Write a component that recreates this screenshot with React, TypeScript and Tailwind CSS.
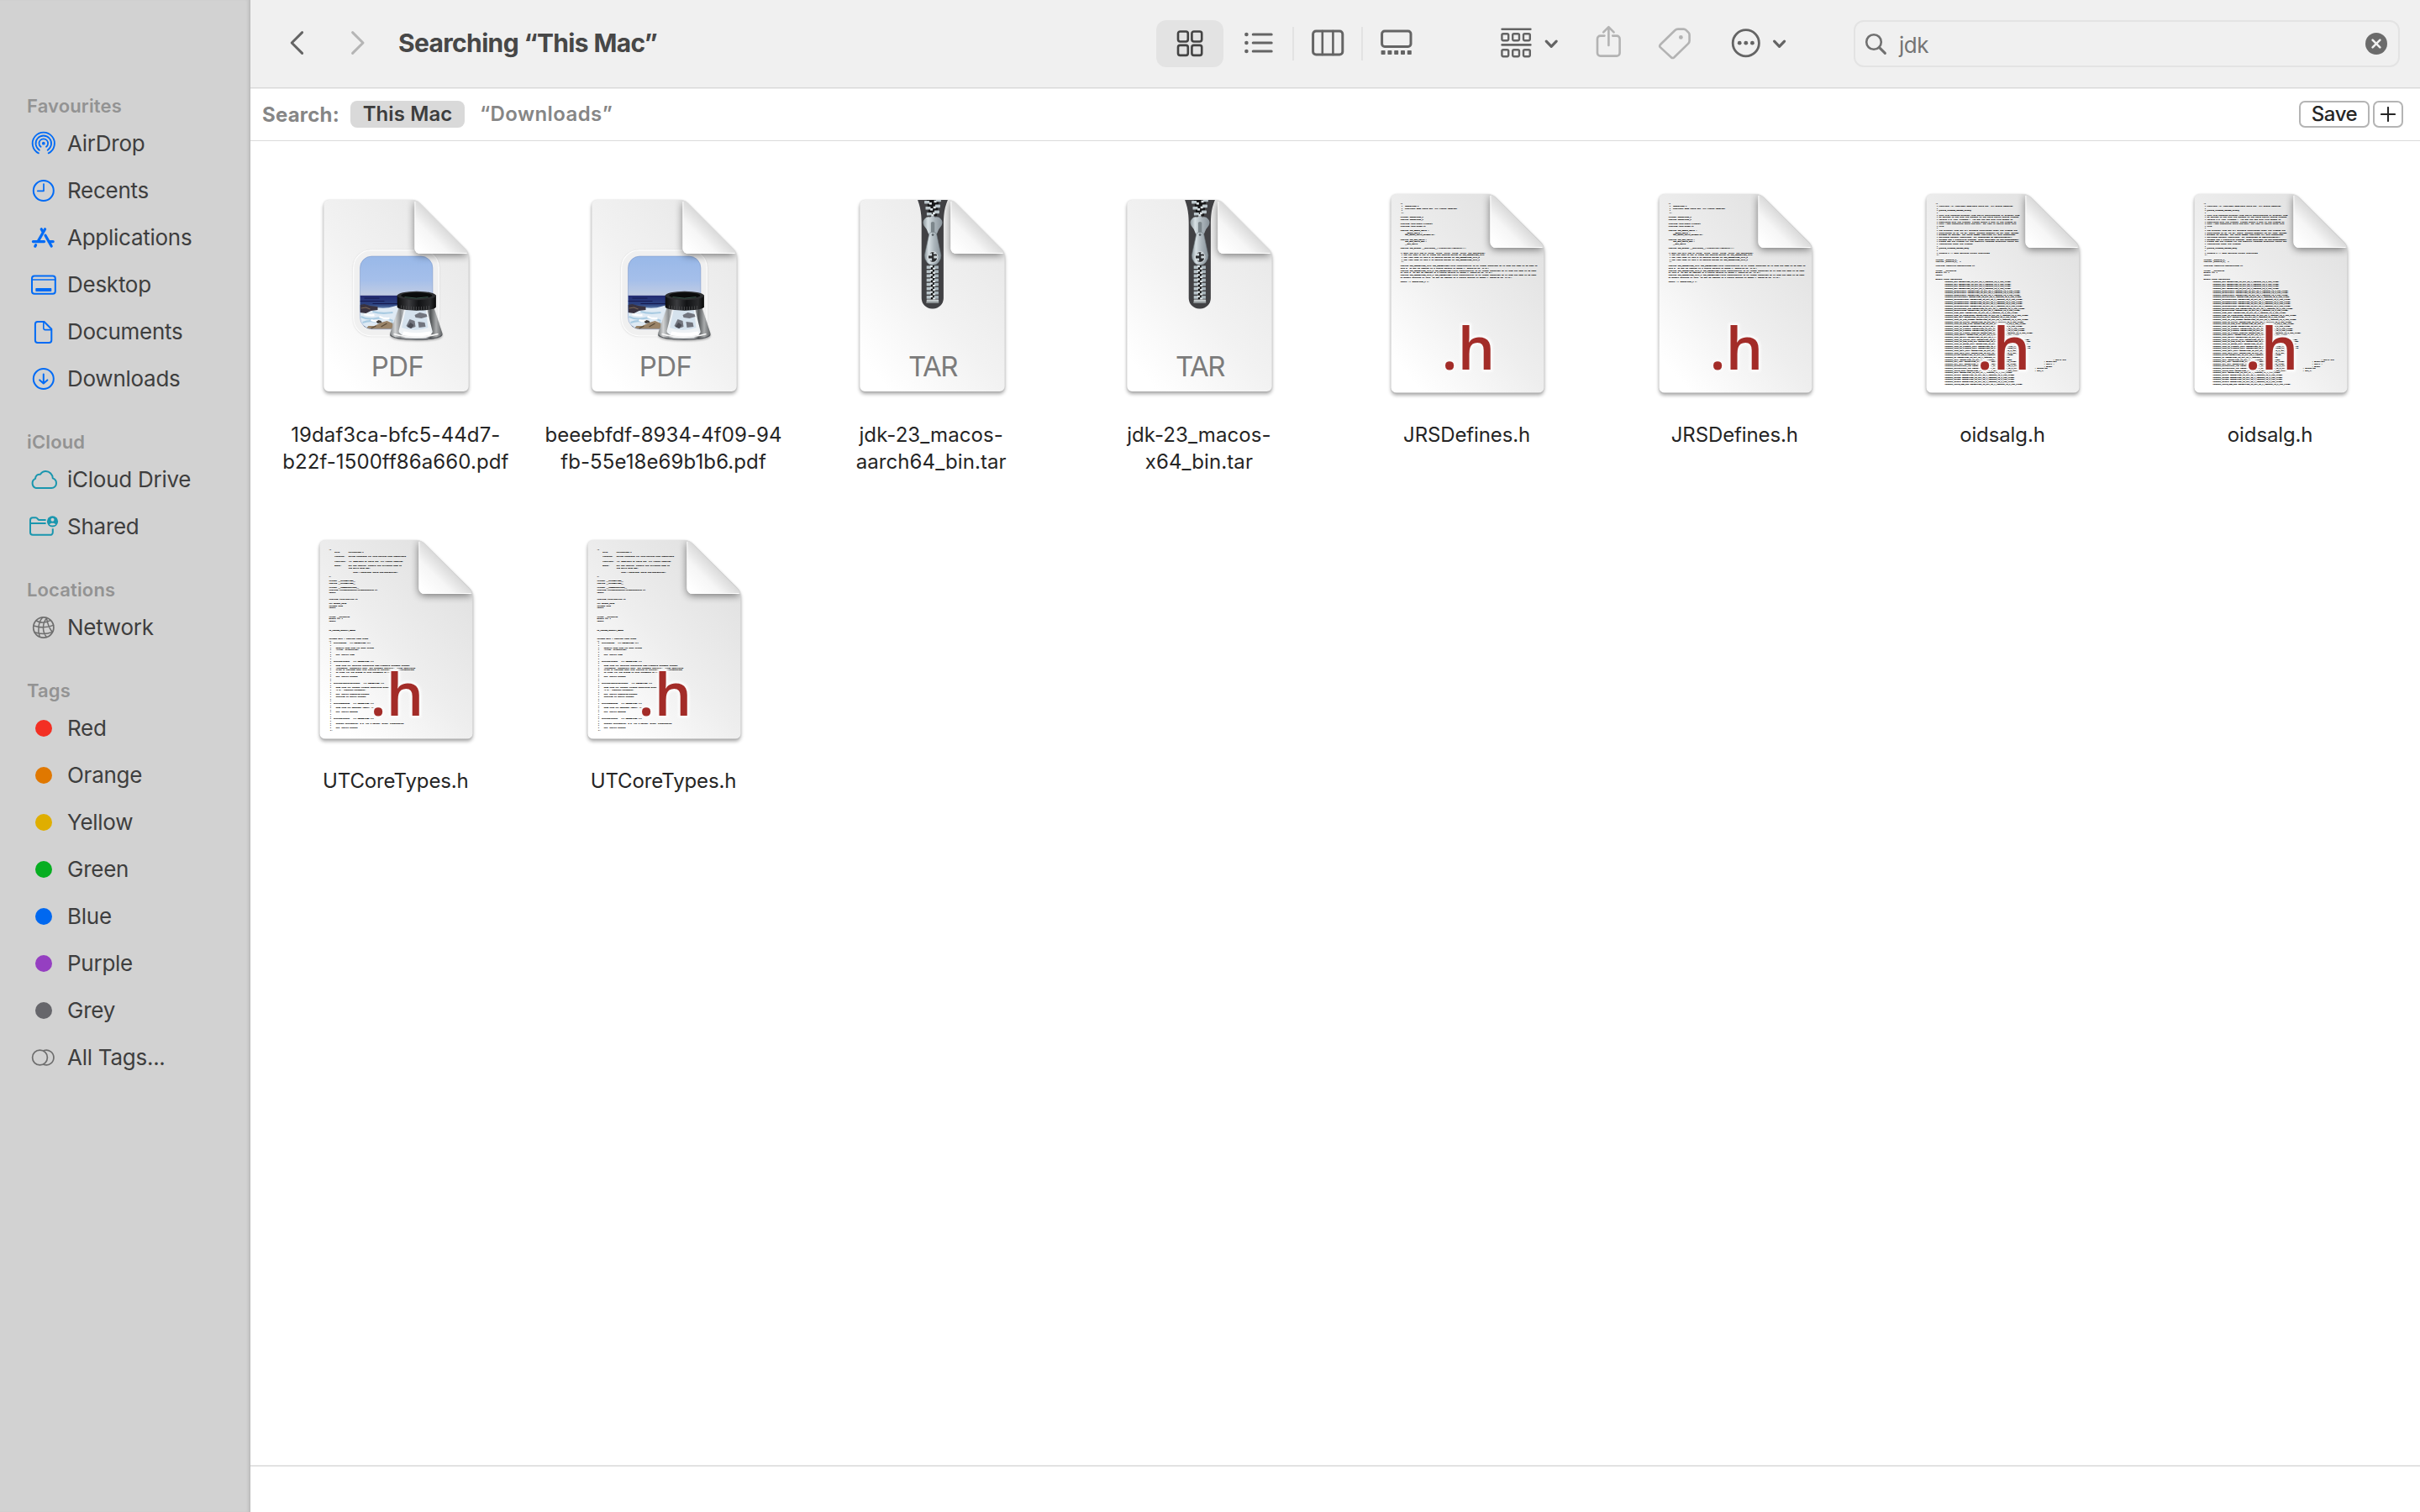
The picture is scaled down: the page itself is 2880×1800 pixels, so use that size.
import type { ReactNode } from 'react';

/* ---------- Sidebar icons (40 × 40 boxes) ---------- */

function SideIcon({ color, children }: { color: string; children: ReactNode }) {
  return (
    <svg width="40" height="40" viewBox="0 0 40 40" fill="none" stroke={color} strokeWidth="2" strokeLinecap="round" strokeLinejoin="round" className="shrink-0">
      {children}
    </svg>
  );
}

const BLUE = '#026bf5';
const TEAL = '#1a96ae';
const GREY = '#6e6e6e';

const AirDrop = () => (
  <SideIcon color={BLUE}>
    <path d="M13.9 31.4A13.1 13.1 0 1 1 25.7 31.4" strokeWidth="1.8" />
    <path d="M14.9 27.7A9.3 9.3 0 1 1 24.7 27.7" strokeWidth="1.8" />
    <path d="M16.6 23.8A5.3 5.3 0 1 1 23 23.8" strokeWidth="1.8" />
    <circle cx="19.8" cy="19.7" r="1.9" fill={BLUE} stroke="none" />
  </SideIcon>
);
const Recents = () => (
  <SideIcon color={BLUE}>
    <circle cx="19.8" cy="20" r="12" />
    <path d="M12.8 20.3H20V12" strokeWidth="1.7" />
  </SideIcon>
);
const Applications = () => (
  <SideIcon color={BLUE}>
    <path d="M21.6 9.8L13.2 24.4M17.2 9.8L19 13M22 17.2L29.2 30M7.4 24.6H20.6M26 24.6H31.2M10.6 28.6L9.8 30.2" strokeWidth="3.2" />
  </SideIcon>
);
const Desktop = () => (
  <SideIcon color={BLUE}>
    <rect x="6" y="9.6" width="27.8" height="21.2" rx="3" />
    <path d="M6 14H34" strokeWidth="1.6" />
    <rect x="10.3" y="24" width="19" height="4" rx="0.8" fill={BLUE} stroke="none" />
  </SideIcon>
);
const Documents = () => (
  <SideIcon color={BLUE}>
    <path d="M12.8 8H20.5L29.3 16.8V30A3 3 0 0 1 26.3 33H12.8A3 3 0 0 1 9.9 30V11A3 3 0 0 1 12.8 8Z" />
    <path d="M19.8 8.4V15.6A2 2 0 0 0 21.8 17.6H29" strokeWidth="1.6" />
  </SideIcon>
);
const Downloads = () => (
  <SideIcon color={BLUE}>
    <circle cx="19.8" cy="20" r="12" />
    <path d="M19.8 14.4V25.4M15.2 21.4L19.8 25.6L24.4 21.4" />
  </SideIcon>
);
const Cloud = () => (
  <SideIcon color={TEAL}>
    <path d="M11 30.1A6 6 0 0 1 10 18.9C10.2 15.2 12.8 13.4 16 13.8C17.6 11.4 19.8 10.1 22.4 10.1C27 10.1 30.6 13.6 30.8 18.4C33.4 19.2 35 21.5 35 24.2A5.8 5.8 0 0 1 29.2 30.1Z" />
  </SideIcon>
);
const Shared = () => (
  <SideIcon color={TEAL}>
    <path d="M22.6 12H14.6C13 12 12.8 9.2 10.4 9.2H7A3 3 0 0 0 4 12.2V26.8A3 3 0 0 0 7 29.8H27.2A3 3 0 0 0 30.8 26.8V22.2M4.4 16H22.6" strokeLinecap="butt" />
    <circle cx="30.5" cy="13.8" r="6.6" fill={TEAL} stroke="none" />
    <circle cx="30.5" cy="11.8" r="2" fill="#d2d2d2" stroke="none" />
    <path d="M26.8 17.6C27.6 15.2 33.4 15.2 34.2 17.6C32.2 18.8 28.8 18.8 26.8 17.6Z" fill="#d2d2d2" stroke="none" />
  </SideIcon>
);
const Network = () => (
  <SideIcon color={GREY}>
    <circle cx="19.8" cy="20" r="12.1" strokeWidth="1.7" />
    <path d="M18.6 8.2C13.6 13.4 12.6 23.4 15.2 31M23.6 8.8C17.8 15.8 18.4 25.6 23.4 31.4M23.4 8.6C24.6 15.8 27 21.6 30.4 25.4M11.4 12C15.6 14.6 22.2 14.4 27.8 11.6M8 18C15.6 20.4 25 20 31.6 17.4M9 25.8C16.4 28.2 24.4 27.8 30.4 25.4" strokeWidth="1.5" />
  </SideIcon>
);
const AllTags = () => (
  <SideIcon color={GREY}>
    <circle cx="15.5" cy="20" r="8.9" strokeWidth="1.7" />
    <path d="M20.4 11.5A8.9 8.9 0 1 1 20.4 28.5" strokeWidth="1.7" />
  </SideIcon>
);

const Dot = ({ className }: { className: string }) => (
  <span className="flex w-[39px] mr-px shrink-0 justify-center">
    <span className={`size-5 rounded-full ${className}`} />
  </span>
);

function Section({ title, children }: { title: string; children: ReactNode }) {
  return (
    <section>
      <h2 className="h-16 pt-[30px] pl-8 text-[22px] leading-[34px] font-semibold text-[#939393] tracking-[0.14px]">{title}</h2>
      <ul>{children}</ul>
    </section>
  );
}

function Item({ icon, label }: { icon: ReactNode; label: string }) {
  return (
    <li className="flex h-14 items-center gap-2 pl-8 text-[26px] leading-[56px] tracking-[-0.26px] text-[#3e3e3e]">
      {icon}
      <span>{label}</span>
    </li>
  );
}

function Sidebar() {
  return (
    <aside className="h-full w-[298px] shrink-0 border-r border-[#b9b9b9] bg-[#d2d2d2] pt-[79px] shadow-[inset_-3px_0_3px_-1px_rgba(0,0,0,0.08)]">
      <Section title="Favourites">
        <Item icon={<AirDrop />} label="AirDrop" />
        <Item icon={<Recents />} label="Recents" />
        <Item icon={<Applications />} label="Applications" />
        <Item icon={<Desktop />} label="Desktop" />
        <Item icon={<Documents />} label="Documents" />
        <Item icon={<Downloads />} label="Downloads" />
      </Section>
      <Section title="iCloud">
        <Item icon={<Cloud />} label="iCloud Drive" />
        <Item icon={<Shared />} label="Shared" />
      </Section>
      <Section title="Locations">
        <Item icon={<Network />} label="Network" />
      </Section>
      <Section title="Tags">
        <Item icon={<Dot className="bg-[#f32f23]" />} label="Red" />
        <Item icon={<Dot className="bg-[#e07800]" />} label="Orange" />
        <Item icon={<Dot className="bg-[#dfae00]" />} label="Yellow" />
        <Item icon={<Dot className="bg-[#07ae21]" />} label="Green" />
        <Item icon={<Dot className="bg-[#0068f0]" />} label="Blue" />
        <Item icon={<Dot className="bg-[#953fc1]" />} label="Purple" />
        <Item icon={<Dot className="bg-[#66666b]" />} label="Grey" />
        <Item icon={<AllTags />} label="All Tags..." />
      </Section>
    </aside>
  );
}

/* ---------- Toolbar ---------- */

const INK = '#646464';

function ToolIcon({ w, color = INK, children }: { w: number; color?: string; children: ReactNode }) {
  return (
    <svg width={w} height="104" viewBox={`0 0 ${w} 104`} fill="none" stroke={color} strokeWidth="3" strokeLinecap="round" strokeLinejoin="round" className="shrink-0">
      {children}
    </svg>
  );
}

const Chevron = ({ x }: { x: number }) => <path d={`M${x} 49.200l6 6.200l6-6.200`} strokeWidth="3.2" />;

function Toolbar() {
  return (
    <header className="flex h-[105px] items-start border-b border-[#d8d8d8] bg-[#f0f0f0] shadow-[0_1px_0_#efefef]">
      <ToolIcon w={176}>
        <path d="M61.6 38.6L49.2 51L61.6 63.4" />
        <path d="M121.6 38.6L134 51L121.6 63.4" stroke="#b5b5b5" />
      </ToolIcon>
      <h1 className="w-[902px] text-[30px] leading-[102px] font-bold tracking-[-0.65px] text-[#474747]">Searching “This Mac”</h1>

      <div className="flex h-[104px] items-center">
        <div className="flex h-14 w-20 items-center justify-center rounded-xl bg-[#e3e3e3]">
          <svg width="32" height="32" viewBox="0 0 32 32" fill="none" stroke="#434343" strokeWidth="2.6">
            <rect x="2" y="1.5" width="11.8" height="12" rx="2.4" />
            <rect x="18.4" y="1.5" width="11.8" height="12" rx="2.4" />
            <rect x="2" y="17.9" width="11.8" height="12" rx="2.4" />
            <rect x="18.4" y="17.9" width="11.8" height="12" rx="2.4" />
          </svg>
        </div>
        <ToolIcon w={82}>
          <path d="M35.2 41H57.2M35.2 51H57.2M35.2 61H57.2" />
          {[41, 51, 61].map((y) => (
            <circle key={y} cx="27.4" cy={y} r="2.3" fill={INK} stroke="none" />
          ))}
        </ToolIcon>
        <span className="h-10 w-0.5 bg-[#e2e2e2]" />
        <ToolIcon w={80}>
          <rect x="22.6" y="37" width="35.2" height="28" rx="3.6" />
          <path d="M33.8 37V65M46.4 37V65" strokeWidth="2.6" />
        </ToolIcon>
        <span className="h-10 w-0.5 bg-[#e2e2e2]" />
        <ToolIcon w={164}>
          <rect x="22.6" y="37" width="34.4" height="18.4" rx="3.2" />
          {[0, 1, 2, 3, 4].map((i) => (
            <rect key={i} x={21.6 + i * 7.8} y="60" width="5" height="5" rx="0.8" fill={INK} stroke="none" />
          ))}
        </ToolIcon>
        <ToolIcon w={110}>
          <path d="M1.6 34.8H35.4M1.6 53.4H35.4" strokeWidth="2.6" />
          {[1.4, 14.2, 27].map((x) => (
            <g key={x} strokeWidth="2.4">
              <rect x={x} y="40.2" width="7.8" height="8" rx="1.6" />
              <rect x={x} y="59.2" width="7.8" height="8" rx="1.6" />
            </g>
          ))}
          <Chevron x={54.2} />
        </ToolIcon>
        <ToolIcon w={76} color="#b3b3b3">
          <path d="M13.4 42.6H8.6A3.6 3.6 0 0 0 5 46.2V63A3.6 3.6 0 0 0 8.6 66.6H28A3.6 3.6 0 0 0 31.6 63V46.2A3.6 3.6 0 0 0 28 42.6H23.2" strokeWidth="2.6" />
          <path d="M18.4 54V32.6M12.2 38.4L18.4 32.2L24.6 38.4" strokeWidth="2.6" />
        </ToolIcon>
        <ToolIcon w={84} color="#b3b3b3">
          <path d="M25 34.6H31.6Q33.4 34.6 34.6 35.8L37.4 38.6Q38.6 39.8 38.6 41.6V48.4Q38.6 50.4 37.2 51.8L20.4 68.2Q18.6 69.8 16.8 68.2L4 56.4Q2.4 54.8 4 53L21.2 36.2Q22.8 34.6 25 34.6Z" strokeWidth="2.6" />
          <circle cx="28.4" cy="44.4" r="2.4" fill="#b3b3b3" stroke="none" />
        </ToolIcon>
        <ToolIcon w={150}>
          <circle cx="21.8" cy="51.2" r="15.6" strokeWidth="2.8" />
          {[14.2, 21.8, 29.4].map((x) => (
            <circle key={x} cx={x} cy="51.2" r="2.4" fill={INK} stroke="none" />
          ))}
          <Chevron x={55.6} />
        </ToolIcon>
      </div>

      <div className="mt-6 flex h-14 w-[650px] items-center rounded-xl border-2 border-[#e3e3e3] pr-[13px]">
        <svg width="50" height="52" viewBox="0 0 50 52" fill="none" stroke="#707070" strokeWidth="2.6" strokeLinecap="round" className="shrink-0">
          <circle cx="22" cy="24" r="8.8" />
          <path d="M28.6 30.6L35.4 37.4" strokeWidth="3" />
        </svg>
        <span className="grow pt-1 pl-0.5 text-[26px] leading-[46px] tracking-[-0.5px] text-[#747474]">jdk</span>
        <svg width="26" height="26" viewBox="0 0 26 26" className="shrink-0">
          <circle cx="13" cy="13" r="13" fill="#6b6b6b" />
          <path d="M8.6 8.6L17.4 17.4M17.4 8.6L8.6 17.4" stroke="#f0f0f0" strokeWidth="2.6" strokeLinecap="round" />
        </svg>
      </div>
    </header>
  );
}

function ScopeBar() {
  return (
    <div className="flex h-[63px] items-start border-b border-[#dadada] pt-[15px] pr-5 pl-[14px] text-[24px] leading-8">
      <span className="w-[105px] pt-px font-bold tracking-[0.2px] text-[#868686]">Search:</span>
      <span className="flex h-8 w-[136px] justify-center rounded-lg bg-[#d9d9d9] leading-[31px] font-semibold tracking-[0.1px] text-[#3d3d3d]">This Mac</span>
      <span className="grow pl-[18px] leading-[31px] font-semibold tracking-[0.4px] text-[#868686]">“Downloads”</span>
      <button className="flex h-8 w-[84px] justify-center rounded-[7px] border-2 border-[#b4b4b4] leading-[27px] font-medium tracking-[-0.4px] text-[#262626]">Save</button>
      <button className="ml-1 flex h-8 w-9 items-center justify-center rounded-[7px] border-2 border-[#b4b4b4]">
        <svg width="18" height="18" viewBox="0 0 18 18" stroke="#262626" strokeWidth="2.1" strokeLinecap="round">
          <path d="M1 9H17M9 1V17" />
        </svg>
      </button>
    </div>
  );
}

/* ---------- File icons (256 × 256 boxes) ---------- */

const SMALL = 'M47.8 17H147Q152 17 155.5 20.5L210.8 76Q214.2 79.4 214.2 84.4V239A6 6 0 0 1 208.2 245H47.8A6 6 0 0 1 41.8 239V23A6 6 0 0 1 47.8 17Z';
const SMALL_FOLD = 'M150 17.4Q153.4 18 156 20.6L210.8 75.8Q213 78.2 213.6 81H156A6 6 0 0 1 150 75Z';
const LARGE = 'M43.4 10H152Q157.4 10 161 13.6L215.4 67.6Q219 71.2 219 76.4V240.2A6.4 6.4 0 0 1 212.6 246.6H43.4A6.4 6.4 0 0 1 37 240.2V16.4A6.4 6.4 0 0 1 43.4 10Z';
const LARGE_FOLD = 'M155 10.4Q158.6 11.2 161.4 14L215 67.4Q218 70.4 218.6 74H161.4A6.4 6.4 0 0 1 155 67.6Z';

function Defs() {
  return (
    <svg width="0" height="0" className="absolute">
      <defs>
        <linearGradient id="page" x1="0.85" y1="0.15" x2="0.15" y2="0.95">
          <stop offset="0" stopColor="#e9e9e9" />
          <stop offset="0.5" stopColor="#f2f2f2" />
          <stop offset="1" stopColor="#ffffff" />
        </linearGradient>
        <linearGradient id="pageDark" x1="0.85" y1="0.15" x2="0.15" y2="0.95">
          <stop offset="0" stopColor="#e2e2e2" />
          <stop offset="0.5" stopColor="#eeeeee" />
          <stop offset="1" stopColor="#ffffff" />
        </linearGradient>
        <linearGradient id="fold" x1="0.08" y1="0.92" x2="0.52" y2="0.48">
          <stop offset="0" stopColor="#ffffff" />
          <stop offset="0.55" stopColor="#f6f6f6" />
          <stop offset="1" stopColor="#dadada" />
        </linearGradient>
        <filter id="blur5" x="-50%" y="-50%" width="200%" height="200%"><feGaussianBlur stdDeviation="5" /></filter>
        <filter id="blur2" x="-20%" y="-20%" width="140%" height="140%"><feGaussianBlur stdDeviation="2" /></filter>
        <filter id="blur1" x="-20%" y="-20%" width="140%" height="140%"><feGaussianBlur stdDeviation="1" /></filter>
        <clipPath id="smallPage"><path d={SMALL} /></clipPath>
        <clipPath id="largePage"><path d={LARGE} /></clipPath>
        <clipPath id="photo"><rect x="85" y="84" width="86.4" height="86.8" rx="14" /></clipPath>
        <linearGradient id="sky" x1="0" y1="0" x2="0" y2="1">
          <stop offset="0" stopColor="#98b8e8" />
          <stop offset="0.6" stopColor="#a5bfea" />
          <stop offset="1" stopColor="#c3cde2" />
        </linearGradient>
        <linearGradient id="sea" x1="0" y1="0" x2="0" y2="1">
          <stop offset="0" stopColor="#232a72" />
          <stop offset="0.6" stopColor="#2c4380" />
          <stop offset="1" stopColor="#7fa4c8" />
        </linearGradient>
        <linearGradient id="cap" x1="0" y1="0" x2="1" y2="0">
          <stop offset="0" stopColor="#0b0b0c" />
          <stop offset="0.3" stopColor="#3b3c3f" />
          <stop offset="0.55" stopColor="#111214" />
          <stop offset="0.85" stopColor="#2a2b2d" />
          <stop offset="1" stopColor="#060606" />
        </linearGradient>
        <linearGradient id="glass" x1="0" y1="0" x2="1" y2="0">
          <stop offset="0" stopColor="#7d8082" />
          <stop offset="0.1" stopColor="#d2d4d5" />
          <stop offset="0.2" stopColor="#8b8e90" />
          <stop offset="0.3" stopColor="#d5d8da" />
          <stop offset="0.68" stopColor="#d0d3d6" />
          <stop offset="0.77" stopColor="#4f5254" />
          <stop offset="0.88" stopColor="#a9abac" />
          <stop offset="1" stopColor="#606365" />
        </linearGradient>
        <linearGradient id="metal" x1="0" y1="0" x2="1" y2="0">
          <stop offset="0" stopColor="#8d979c" />
          <stop offset="0.25" stopColor="#d6dfe3" />
          <stop offset="0.6" stopColor="#aab4ba" />
          <stop offset="1" stopColor="#89939a" />
        </linearGradient>
      </defs>
    </svg>
  );
}

function Page({ large, children, over }: { large?: boolean; children?: ReactNode; over?: ReactNode }) {
  const shape = large ? LARGE : SMALL;
  const fold = large ? LARGE_FOLD : SMALL_FOLD;
  return (
    <svg width="256" height="256" viewBox="-1.5 0 256 256" className="block overflow-visible">
      <path d={shape} fill="#000" opacity="0.34" filter="url(#blur2)" transform="translate(0 3)" />
      <path d={shape} fill="#000" opacity="0.12" filter="url(#blur1)" />
      <path d={shape} fill={large ? 'url(#pageDark)' : 'url(#page)'} />
      <g clipPath={large ? 'url(#largePage)' : 'url(#smallPage)'}>
        {children}
        <path d={fold} fill="#000" opacity="0.5" filter="url(#blur5)" transform="translate(0 2)" />
      </g>
      <path d={fold} fill="url(#fold)" />
      <path d={large ? 'M155.4 12V67.6A6 6 0 0 0 161.4 73.5H217' : 'M150.4 19V75A5.6 5.6 0 0 0 156 80.5H212'} fill="none" stroke="#fff" strokeWidth="1" />
      {over}
    </svg>
  );
}

function Caption({ text, x, spacing }: { text: string; x: number; spacing: number }) {
  return (
    <text x={x} y="227" textAnchor="middle" fontFamily="Inter, sans-serif" fontSize="33" fill="#7b7b7b" letterSpacing={spacing}>
      {text}
    </text>
  );
}

function PdfIcon() {
  return (
    <Page
      over={
        <>
          <path d="M132 146L121 178Q119.6 185 152 185T183 178L172 146Z" fill="#000" opacity="0.3" filter="url(#blur1)" />
          <path d="M131.5 144L120.6 176Q119 183.4 151.8 183.4T183 176L172.500 144Z" fill="url(#glass)" />
          <path d="M138 146L131 173Q131 179.500 152 179.500T171 173L164.500 146Z" fill="#eef2f5" />
          <path d="M139.500 147H163L166 169Q150 175 134.500 169Z" fill="#d5e2ed" />
          <path d="M150 154l6-3 8 2 1 3-7 2-7-1zM140 167l4-8 6 2 1 7-6 2zM154 162l8 1 1 5-8 1z" fill="#72757e" />
          <path d="M141 168l4-5 4 3-3 4z" fill="#4c4e56" />
          <path d="M135 177.500Q152 181.500 170 177.500L168 173.500Q152 177 137 173.500Z" fill="#fff" />
          <path d="M125 176.500Q150 184 178 176.500" fill="none" stroke="#f8f8f8" strokeWidth="1.8" />
          <path d="M121 177.500Q124 183 151.8 183T182.600 177.500" fill="none" stroke="#56595d" strokeWidth="1.4" />
          <path d="M129.200 130.500V144.500C131 150 173.400 150 175.400 144.500V130.500Z" fill="url(#cap)" />
          <ellipse cx="152.300" cy="131" rx="23.100" ry="5.200" fill="#2d2e30" />
          <ellipse cx="152.300" cy="130.700" rx="18.500" ry="3.500" fill="#0a0b0b" />
          <path d="M138 132.600Q152 135.600 166 132.600" fill="none" stroke="#39554a" strokeWidth="1" />
          <path d="M134 142.500v4M137 142.900v4M140 143.300v4M143 143.600v4M146 143.800v4M149 143.900v4M152 144v4M155 144v4M158 143.900v4M161 143.700v4M164 143.400v4M167 143v4" stroke="#4a4b4d" strokeWidth="0.8" />
          <Caption text="PDF" x={129.6} spacing={-0.6} />
        </>
      }
    >
      <rect x="76.8" y="76.8" width="102.4" height="102.8" rx="21" fill="#000" opacity="0.14" filter="url(#blur1)" />
      <rect x="77.2" y="76.8" width="101.6" height="102" rx="21" fill="#f0f0f0" stroke="#fdfdfd" strokeWidth="1.2" />
      <g clipPath="url(#photo)">
        <rect x="84" y="83" width="89" height="49" fill="url(#sky)" />
        <rect x="84" y="130.8" width="89" height="18" fill="url(#sea)" />
        <path d="M84 148Q92 143 104 145T126 143.500T173 144V172H84Z" fill="#dfeaf4" />
        <path d="M84 137.500h30M100 140.500h34M90 134h18" stroke="#151a50" strokeWidth="1" />
        <path d="M86 156q8 4 18 2t20 3M100 150q10 3 24 1M88 163q8-3 16-1M108 165q8 2 16-2" fill="none" stroke="#a9cbe2" strokeWidth="2.2" />
        <path d="M90 153q8 2 12 1M108 156q6 3 12 2M98 160q4 2 10 1" fill="none" stroke="#fff" strokeWidth="2.4" />
        <path d="M84 142l6-1 7 2 9 1 0 4-8 1-6 3-8-1z" fill="#3a3340" />
        <path d="M86 146l6-1 5 2" stroke="#7a6654" fill="none" strokeWidth="1.2" />
        <path d="M92 170l3-3 7 0 8-4 7-2 7 3 0 8H92z" fill="#9a8469" />
        <path d="M84 166l6 1 4 4h-10zM104 162l3-2 3 1 1 2-5 1z" fill="#3f3a36" />
        <path d="M98 170l6-3M110 168l7-4" stroke="#5a4a38" strokeWidth="1.2" />
      </g>
      <rect x="85" y="84" width="86.4" height="86.8" rx="14" fill="none" stroke="#6f8cc0" strokeOpacity="0.45" strokeWidth="1" />
    </Page>
  );
}

function TarIcon() {
  const lower = [0, 1, 2, 3, 4, 5, 6, 7];
  return (
    <Page over={<Caption text="TAR" x={128.6} spacing={-1.48} />}>
      <path d="M110.600 17C114 26 115.200 34 115.200 46V134A12.400 12.400 0 0 0 127.600 146.400H129A12.400 12.400 0 0 0 141.400 134V46C141.400 34 142.600 26 146.400 17Z" fill="#414144" />
      <path d="M121.400 17H136L133.400 36H124.400Z" fill="#161617" />
      {[0, 1, 2].map((i) => (
        <g key={i} fill="#bcc7cc">
          <rect x={118.6 + i * 1.4} y={18 + i * 7} width="6" height="3.6" rx="0.6" />
          <rect x={124.4 + i * 1.2} y={20 + i * 7} width="3" height="2.6" fill="#dde4e7" />
          <rect x={132.4 - i} y={15.6 + i * 7} width="6" height="3.6" rx="0.6" />
          <rect x={130 - i * 0.8} y={17.6 + i * 7} width="3" height="2.6" fill="#dde4e7" />
        </g>
      ))}
      <rect x="126" y="90" width="5" height="46" fill="#111" />
      {lower.map((i) => (
        <g key={i}>
          <rect x="121.2" y={95.4 + i * 5.1} width="5.2" height="3.6" fill="#b9c5ca" />
          <rect x="125.4" y={95 + i * 5.1} width="3" height="2.2" fill="#dfe6e9" />
          <rect x="130.2" y={95.4 + i * 5.1} width="5.2" height="3.6" fill="#a9b6bc" />
          <rect x="128.6" y={97.6 + i * 5.1} width="3" height="2.2" fill="#dfe6e9" />
        </g>
      ))}
      <rect x="121.2" y="135.4" width="14.4" height="4.6" rx="0.6" fill="#c3c9cb" />
      <rect x="121.2" y="138" width="14.4" height="2" fill="#8e9496" />
      <path d="M119 39.500Q121 36.400 125.600 37.400Q128.400 35 131.200 37.400Q136 36.400 138 39.500Q141.400 43 139 47.500Q134.800 52 133.200 58H123.800Q122.200 52 118 47.500Q115.600 43 119 39.500Z" fill="url(#metal)" />
      <path d="M124.400 57Q128.600 53 133 57L138.400 83A9.800 11.500 0 1 1 118.800 83Z" fill="url(#metal)" stroke="#6f797e" strokeWidth="0.6" />
      <path d="M126.400 44V55Q128.600 57 130.800 55V44Q128.600 42 126.400 44Z" fill="#7c868b" />
      <circle cx="128.600" cy="58.600" r="1.3" fill="#555d62" />
      <ellipse cx="128.600" cy="85" rx="5.8" ry="6.4" fill="#2b2c2e" />
      <path d="M123.600 80.500h4v3h-4zM129.800 83.500h4v3h-4zM123.600 86.500h4v3h-4zM129.500 79.500h3v2h-3z" fill="#cfd8dc" />
      <ellipse cx="128.600" cy="85" rx="5.8" ry="6.4" fill="none" stroke="#e3eaed" strokeWidth="1" />
    </Page>
  );
}

const JRS = `/*
 *  JRSDefines.h
 *  Copyright 2002 Apple Inc. All rights reserved.
 *
 */

#ifndef JRSDefines_h
#define JRSDefines_h

#include <sys/cdefs.h/cdefs>
#include <sys/types.h>

#define JRS_BEGIN_DECLS \\
    __BEGIN_DECLS \\
    JRS_BEGIN_DECLS_EXTERN(xx)

#define JRS_END_DECLS \\
    JRS_END_DECLS_END \\
    __END_DECLS

#define JRS_EXPORT __attribute__((visibility("default")))

/* Each API will use of JAVA5, JAVA6, JAVA7, JAVA8, JAVA9, and deprecated:
 * API not used in any of these and getting marked as JRS_DEPRECATED_JAVA
 * API last used in Java 5 is getting marked as JRS_DEPRECATED_JAVA_5
 * API last used in Java 7 is getting marked as JRS_DEPRECATED_JAVA_7
 */

#define JRS_DEPRECATED_JAVA JRS_DEPRECATED("This functionality is no longer supported as it does not need to be used in
Java 5. It may be removed in a future version of macOS.", macos(10.10, 11.0))
#define JRS_DEPRECATED_JAVA_6 JRS_DEPRECATED("This functionality is no longer supported as it does not need to be used
in Java 6. It may be removed in a future version of macOS.", macos(10.10, 11.0))
#define JRS_DEPRECATED_JAVA_7 JRS_DEPRECATED("This functionality is no longer supported as it does not need to be used
in modern versions of Java. It may be removed in a future version of macOS.", macos(10.10, 11.0))

#endif /* JRSDefines_h */`.split('\n');

const OID_NAMES = 'MD2 MD4 MD5 RSA MD2WithRSAX MD4WithRSAX MD5WithRSAX SHA1WithRSAX SHA224WithRSA SHA256WithRSA SHA384WithRSA SHA512WithRSA SHA1WithRSA_OIW RSAWithOAEP OAEP_MGF1 OAEP_ID_PSPECIFIED DES_CBCX ANSI_DH_PUB_NUMBER ANSI_DH_STATIC ANSI_DH_ONE_FLOW ANSI_DH_EPHEM ANSI_DH_HYBRID1 ANSI_DH_HYBRID2 ANSI_DH_HYBRID_ONEFLOW ANSI_MQV1X ANSI_MQV2XX ANSI_DH_STATIC_SHA1 ANSI_DH_ONE_FLOW_SHA ANSI_DH_EPHEM_SHA1 ANSI_DH_HYBRID1_SHA1 ANSI_DH_HYBRID2_SHA1 ANSI_MQV1_SHA1 ANSI_MQV2_SHA1 PKCS3 DH DSAX DSA_CMSX DSA_JDKX SHA1WithDSA_CMS SHA1WithDSA_JDK APPLE_ISIG SHA1 SHA224 SHA256 SHA384 SHA512 APPLE_FEE_MD5'.split(' ');

const OIDS = [
  ...`/*
 * Copyright (c) 1999-2001,2003-2010 Apple Inc. All Rights Reserved.
 *
 * @APPLE_LICENSE_HEADER_START@
 *
 * This file contains Original Code and/or Modifications of Original Code
 * as defined in and that are subject to the Apple Public Source License
 * Version 2.0 (the 'License'). You may not use this file except in
 * compliance with the License. Please obtain a copy of the License at
 * http://www.opensource.apple.com/apsl/ and read it before using this
 * file.
 *
 * The Original Code and all software distributed under the License are
 * distributed on an 'AS IS' basis, WITHOUT WARRANTY OF ANY KIND, EITHER
 * EXPRESS OR IMPLIED, AND APPLE HEREBY DISCLAIMS ALL SUCH WARRANTIES,
 * INCLUDING WITHOUT LIMITATION, ANY WARRANTIES OF MERCHANTABILITY,
 * FITNESS FOR A PARTICULAR PURPOSE, QUIET ENJOYMENT OR NON-INFRINGEMENT.
 * Please see the License for the specific language governing rights and
 * limitations under the License.
 *
 * @APPLE_LICENSE_HEADER_END@
 *
 * oidsalg.h -- OIDs defining crypto algorithms
 */

#ifndef _OIDSALG_H_
#define _OIDSALG_H_  1

#include <Security/SecAsn1Types.h>

#ifdef __cplusplus
extern "C" {
#endif

extern const SecAsn1Oid`.split('\n'),
  ...OID_NAMES.map((n) => `        CSSMOID_${n} DEPRECATED_IN_MAC_OS_X_VERSION_10_7_AND_LATER,`),
];

const UTC = `/*
     File:       UTCoreTypes.h

     Contains:   String constants for core uniform type identifiers

     Copyright:  (c) 2003-2012 by Apple Inc. All rights reserved.

     Bugs?:      For bug reports, consult the following page on
                 the World Wide Web:

                     http://developer.apple.com/bugreporter/

*/

#ifndef __UTCORETYPES__
#define __UTCORETYPES__

#ifndef __COREFOUNDATION__
#include <CoreFoundation/CoreFoundation.h>
#endif


#include <Availability.h>

#if PRAGMA_ONCE
#pragma once
#endif



#ifdef __cplusplus
extern "C" {
#endif



CF_ASSUME_NONNULL_BEGIN



#pragma mark - Abstract base types
/*
 *  kUTTypeItem   *** DEPRECATED ***
 *
 *    generic base type for most things
 *    (files, directories)
 *
 *    UTI: public.item
 *
 *
 *  kUTTypeContent   *** DEPRECATED ***
 *
 *    base type for anything containing user-viewable document content
 *    (documents, pasteboard data, and document packages). Types describing
 *    files or packages must also conform to kUTTypeData or kUTTypePackage
 *    in order for the system to bind documents to them.
 *
 *    UTI: public.content
 *
 *
 *  kUTTypeCompositeContent   *** DEPRECATED ***
 *
 *    base type for content formats supporting mixed
 *    (i.e., compound documents)
 *
 *    UTI: public.composite-content
 *    conforms to public.content
 *
 *
 *  kUTTypeMessage   *** DEPRECATED ***
 *
 *    base type for messages (email, IM, etc.)
 *
 *    UTI: public.message
 *
 *
 *  kUTTypeContact   *** DEPRECATED ***
 *
 *    contact information, e.g. for a person, group, organization
 *
 *    UTI: public.contact
 */`.split('\n');

function CodeIcon({ lines, notes }: { lines: string[]; notes?: boolean }) {
  return (
    <Page
      large
      over={
        <>
          <text x="97" y="219" fontFamily="'Open Sans', sans-serif" fontWeight="600" fontSize="70" fill="#fafafa" stroke="#fafafa" strokeWidth="6" strokeLinejoin="round" filter="url(#blur1)" aria-hidden="true">
            .h
          </text>
          <text x="97" y="219" fontFamily="'Open Sans', sans-serif" fontWeight="600" fontSize="70" fill="#a32c28">
            .h
          </text>
        </>
      }
    >
      <g fontFamily="'Liberation Mono', monospace" fontSize="2.29" fill="#000" stroke="#000" strokeWidth="0.13" className="whitespace-pre">
        {lines.map((line, i) => (
          <text key={i} x="48" y={22.4 + i * 2.645} xmlSpace="preserve">
            {line}
          </text>
        ))}
        {notes && (
          <g>
            <text x="188" y="207.6">/ SHA-2 alg</text>
            <text x="177" y="210.2">; ECDSA/SHA</text>
            <text x="177" y="212.9">; SHA-1 ;</text>
            <text x="177" y="215.5">; ECDSA</text>
            <text x="166" y="218.2">; SHA224/25</text>
            <text x="166" y="220.8">; SHA_1;</text>
          </g>
        )}
      </g>
    </Page>
  );
}

const FILES: { label: string[]; icon: ReactNode }[] = [
  { label: ['19daf3ca-bfc5-44d7-', 'b22f-1500ff86a660.pdf'], icon: <PdfIcon /> },
  { label: ['beeebfdf-8934-4f09-94', 'fb-55e18e69b1b6.pdf'], icon: <PdfIcon /> },
  { label: ['jdk-23_macos-', 'aarch64_bin.tar'], icon: <TarIcon /> },
  { label: ['jdk-23_macos-', 'x64_bin.tar'], icon: <TarIcon /> },
  { label: ['JRSDefines.h'], icon: <CodeIcon lines={JRS} /> },
  { label: ['JRSDefines.h'], icon: <CodeIcon lines={JRS} /> },
  { label: ['oidsalg.h'], icon: <CodeIcon lines={OIDS} notes /> },
  { label: ['oidsalg.h'], icon: <CodeIcon lines={OIDS} notes /> },
  { label: ['UTCoreTypes.h'], icon: <CodeIcon lines={UTC} /> },
  { label: ['UTCoreTypes.h'], icon: <CodeIcon lines={UTC} /> },
];

function FileGrid() {
  return (
    <div className="grid grow auto-rows-[412px] grid-cols-[repeat(8,318.7px)] content-start pt-[53px] pl-[13px]">
      {FILES.map((f, i) => (
        <figure key={i} className="flex flex-col items-center">
          {f.icon}
          <figcaption className={`mt-[25px] pl-px text-center text-[24px] leading-8 text-[#252525] ${f.label.length > 1 ? 'tracking-[0.09px]' : 'tracking-[-0.12px]'}`}>
            {f.label.map((l) => (
              <span key={l} className="block whitespace-nowrap">{l}</span>
            ))}
          </figcaption>
        </figure>
      ))}
    </div>
  );
}

export default function App() {
  return (
    <div className="flex h-[1800px] w-[2880px] overflow-hidden bg-white font-['Inter',sans-serif]">
      <Defs />
      <Sidebar />
      <main className="flex min-w-0 grow flex-col">
        <Toolbar />
        <ScopeBar />
        <FileGrid />
        <footer className="h-14 border-t-2 border-[#e2e2e2]" />
      </main>
    </div>
  );
}
